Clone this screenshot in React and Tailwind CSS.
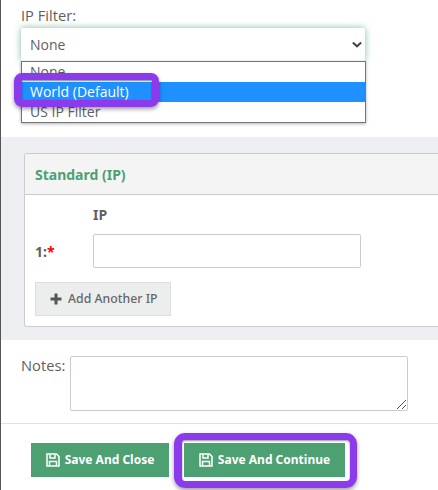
function SaveIcon() {
  return (
    <svg viewBox="0 0 14 14" className="w-[14px] h-[14px]" fill="none" stroke="currentColor" strokeWidth="1.500">
      <path d="M1 1h9.500L13 3.500V13H1z" />
      <path d="M4 1.500v3.500h5V1.500" />
      <path d="M3.500 13V8.500h7V13" />
    </svg>
  );
}

export default function App() {
  return (
    <div className="relative w-[438px] h-[490px] overflow-hidden bg-white border-l border-[#555] font-['Open_Sans',sans-serif] text-[14px] text-[#5f5f5f]">
      {/* IP filter */}
      <div className="h-[137px] pl-[20px] pt-[6px]">
        <div className="leading-[19px] h-[22px] text-[14.7px]">IP Filter:</div>
        <div className="flex items-center justify-between w-[344px] h-[33px] pl-[9px] pr-[3px] bg-white rounded-[2px] shadow-[0_0_7px_rgba(76,160,114,0.7)]">
          <span>None</span>
          <svg viewBox="0 0 12 8" className="w-[10px] h-[7px]" fill="none" stroke="#444" strokeWidth="2.4">
            <path d="M1 1.500L6 6.200L11 1.500" />
          </svg>
        </div>
      </div>

      {/* dropdown list */}
      <div className="absolute left-[20px] top-[61px] w-[345px] h-[62px] bg-white border border-[#767676] shadow-[0_1px_3px_rgba(0,0,0,0.3)] leading-[20px]">
        <div className="h-[20px] pl-[8px]">None</div>
        <div className="h-[20px] pl-[8px] bg-[#1e90ff] text-white">World (Default)</div>
        <div className="h-[20px] pl-[8px]">US IP Filter</div>
      </div>

      {/* standard ip */}
      <div className="h-[203px] bg-[#eeeff3] pl-[23px] pt-[16px]">
        <div className="h-[174px] bg-white border border-[#ccc] border-r-0 rounded-tl-[3px] rounded-bl-[3px]">
          <div className="flex items-center h-[41px] pl-[10px] bg-[#f5f4f5] border-b border-[#ccc] font-['Noto_Sans',sans-serif] font-bold text-[14px] text-[#4ca072]">
            Standard (IP)
          </div>
          <div className="pl-[10px] pt-[10px]">
            <div className="pl-[58px] h-[29px] font-['Noto_Sans',sans-serif] font-bold text-[14px] leading-[20px]">IP</div>
            <div className="flex items-center h-[34px]">
              <div className="w-[58px] font-['Noto_Sans',sans-serif] font-bold text-[14px]">
                1:<span className="text-[#f00]">*</span>
              </div>
              <div className="w-[268px] h-[34px] bg-white border border-[#ccc] rounded-[2px]" />
            </div>
            <div className="flex items-center gap-[6px] w-[136px] h-[34px] mt-[14px] pl-[14px] bg-[#eceeee] border border-[#ddd] font-['Noto_Sans',sans-serif] font-medium text-[12.3px] text-[#666]">
              <svg viewBox="0 0 12 12" className="w-[12px] h-[12px]" fill="#555">
                <path d="M4.500 0.500h3v4h4v3h-4v4h-3v-4h-4v-3h4z" />
              </svg>
              Add Another IP
            </div>
          </div>
        </div>
      </div>

      {/* notes */}
      <div className="flex h-[84px] pl-[20px] pt-[16px] border-b border-[#e2e2e2]">
        <div className="w-[49px] leading-[19px] text-[14.7px]">Notes:</div>
        <div className="relative w-[338px] h-[55px] bg-white border border-[#ccc] rounded-[2px]">
          <svg className="absolute right-[1px] bottom-[1px] w-[9px] h-[9px]" viewBox="0 0 9 9" stroke="#555" strokeWidth="1">
            <path d="M0 9L9 0M5 9L9 5" />
          </svg>
        </div>
      </div>

      {/* buttons */}
      <div className="flex gap-[15px] pl-[30px] pt-[19px]">
        <div className="flex items-center justify-center gap-[5px] w-[138px] h-[34px] bg-[#4ca072] text-white font-['Noto_Sans',sans-serif] font-bold text-[12px]">
          <SaveIcon />
          Save And Close
        </div>
        <div className="flex items-center justify-center gap-[5px] w-[161px] h-[34px] bg-[#4ca072] text-white font-['Noto_Sans',sans-serif] font-bold text-[12px]">
          <SaveIcon />
          Save And Continue
        </div>
      </div>

      {/* purple annotations */}
      <div className="absolute left-[13px] top-[73px] w-[145px] h-[34px] border-[7px] border-l-[8px] border-[#8b3bec] rounded-[8px] shadow-[0_2px_4px_rgba(0,0,0,0.4),inset_0_1px_2px_rgba(0,0,0,0.5)]" />
      <div className="absolute left-[173px] top-[433px] w-[183px] h-[55px] border-[7px] border-l-[8px] border-[#8b3bec] rounded-[11px] shadow-[0_2px_4px_rgba(0,0,0,0.4),inset_0_1px_2px_rgba(0,0,0,0.4)]" />
    </div>
  );
}
